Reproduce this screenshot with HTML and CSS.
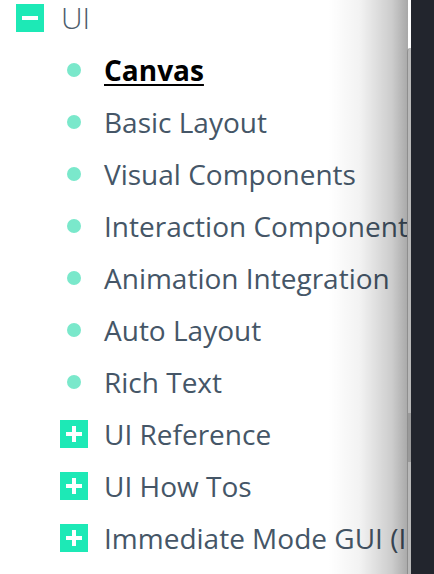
FILE: index.html
```html
<!DOCTYPE html>
<html>
<head>
<meta charset="utf-8">
<link rel="stylesheet" href="styles.css">
</head>
<body>
<div class="page">
  <ul class="tree">
    <li class="row root">
      <span class="box"><span class="minus"></span></span>
      <span class="label root-label">UI</span>
    </li>
    <li class="row child"><span class="dot"></span><a class="label active">Canvas</a></li>
    <li class="row child"><span class="dot"></span><span class="label">Basic Layout</span></li>
    <li class="row child"><span class="dot"></span><span class="label">Visual Components</span></li>
    <li class="row child"><span class="dot"></span><span class="label">Interaction Components</span></li>
    <li class="row child"><span class="dot"></span><span class="label">Animation Integration</span></li>
    <li class="row child"><span class="dot"></span><span class="label">Auto Layout</span></li>
    <li class="row child"><span class="dot"></span><span class="label">Rich Text</span></li>
    <li class="row child"><span class="box"><span class="plus"></span></span><span class="label">UI Reference</span></li>
    <li class="row child"><span class="box"><span class="plus"></span></span><span class="label">UI How Tos</span></li>
    <li class="row child"><span class="box"><span class="plus"></span></span><span class="label">Immediate Mode GUI (IMGUI)</span></li>
  </ul>
  <div class="shade"></div>
  <div class="track"><div class="thumb"></div></div>
  <div class="panel"></div>
</div>
</body>
</html>
```
FILE: styles.css
```css
html, body {
  margin: 0;
  padding: 0;
  background: #ffffff;
}
.page {
  position: relative;
  width: 434px;
  height: 574px;
  overflow: hidden;
  font-family: "Open Sans", "Noto Sans", sans-serif;
}
.tree {
  list-style: none;
  margin: -8px 0 0 0;
  padding: 0;
  width: 408px;
  overflow: hidden;
}
.row {
  display: flex;
  align-items: center;
  height: 52px;
  white-space: nowrap;
}
.root {
  padding-left: 16px;
  gap: 17px;
}
.child {
  padding-left: 60px;
  gap: 16px;
}
.box {
  flex: none;
  width: 28px;
  height: 28px;
  background: #1de9b6;
  position: relative;
}
.minus {
  position: absolute;
  left: 6px;
  top: 12px;
  width: 16px;
  height: 4px;
  background: #ffffff;
}
.plus {
  position: absolute;
  left: 6px;
  top: 12px;
  width: 16px;
  height: 4px;
  background: #ffffff;
}
.plus::after {
  content: "";
  position: absolute;
  left: 6px;
  top: -6px;
  width: 4px;
  height: 16px;
  background: #ffffff;
}
.dot {
  flex: none;
  width: 14px;
  height: 14px;
  margin: 0 7px 0 7px;
  border-radius: 50%;
  background: #7ae8cb;
  filter: blur(0.5px);
}
.label {
  font-size: 28px;
  color: #455667;
  line-height: 1;
}
.root-label {
  font-size: 30px;
  font-weight: 300;
  color: #4d5d6c;
}
.active {
  color: #000000;
  font-weight: 700;
  text-decoration: underline;
  text-decoration-thickness: 2px;
  text-underline-offset: 3px;
}
.shade {
  position: absolute;
  left: 328px;
  top: 0;
  width: 80px;
  height: 574px;
  background: linear-gradient(to right, rgba(0,0,0,0) 0%, rgba(0,0,0,0.05) 40%, rgba(0,0,0,0.2) 80%, rgba(0,0,0,0.34) 100%);
}
.track {
  position: absolute;
  left: 407px;
  top: 48px;
  width: 4px;
  height: 540px;
  background: #b8b8b8;
  border-left: 1px solid #8e8e8e;
  border-top-left-radius: 4px;
  box-sizing: border-box;
}
.thumb {
  position: absolute;
  left: 0;
  top: 365px;
  width: 3px;
  height: 49px;
  background: #9a9a9a;
}
.panel {
  position: absolute;
  left: 411px;
  top: 0;
  width: 23px;
  height: 574px;
  background: #22252d;
}
```
